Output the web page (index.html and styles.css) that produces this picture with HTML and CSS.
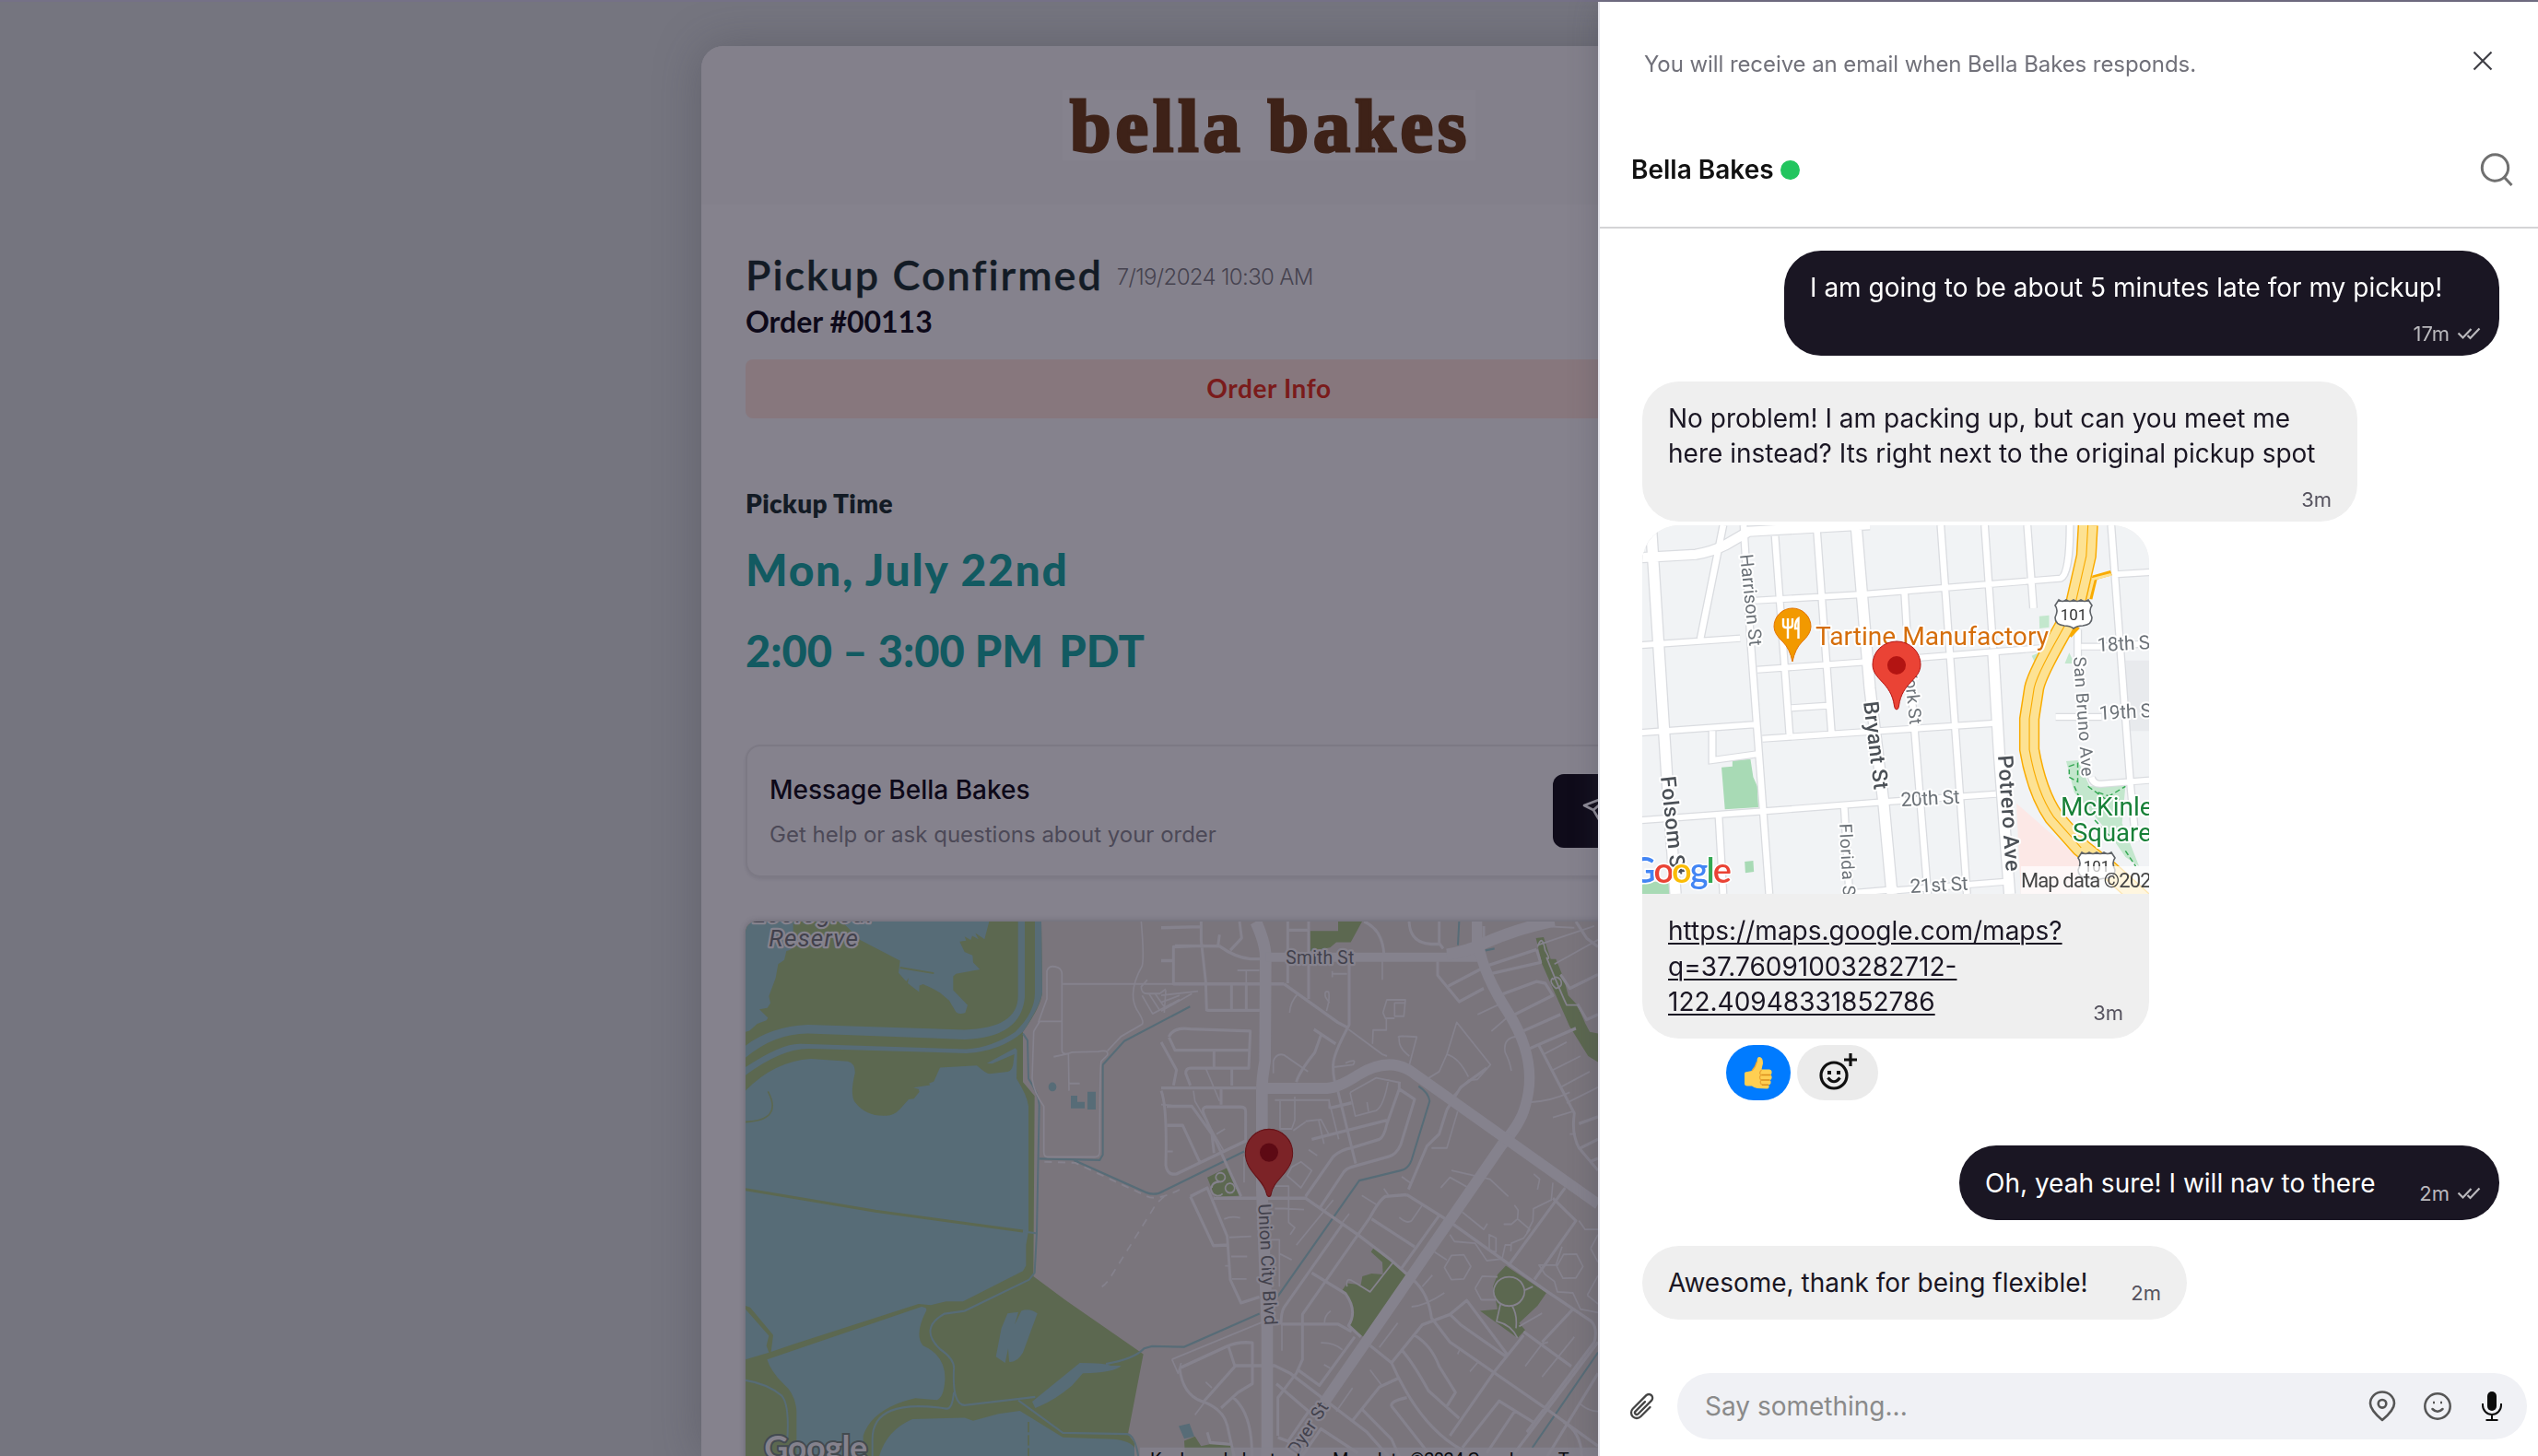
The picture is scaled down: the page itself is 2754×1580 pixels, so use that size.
FILE: index.html
```html
<!DOCTYPE html>
<html lang="en">
<head>
  <meta charset="UTF-8">
  <title>Bella Bakes - Order #00113</title>
  <meta name="viewport" content="width=device-width, initial-scale=1">
  <link rel="stylesheet" href="styles.css">
</head>
<body>
  <main class="order-card">
    <header class="brand"><span class="logo">bella bakes</span></header>
    <div class="order-body">
      <div class="title-row">
        <h1>Pickup Confirmed</h1>
        <span class="date">7/19/2024 10:30 AM</span>
      </div>
      <h2 class="order-number">Order #00113</h2>
      <button class="order-info">Order Info</button>
      <h3 class="pickup-label">Pickup Time</h3>
      <p class="pickup-day">Mon, July 22nd</p>
      <p class="pickup-hours">2:00 – 3:00 PM <span class="zone">PDT</span></p>
      <section class="message-card">
        <div>
          <div class="message-title">Message Bella Bakes</div>
          <div class="message-sub">Get help or ask questions about your order</div>
        </div>
        <button class="message-btn">
          <svg width="40" height="40" viewBox="0 0 40 40" fill="none" stroke="#8f8c98" stroke-width="2.6" stroke-linejoin="round"><path d="M2 14L36 1L22 36L12 19Z M12 19L20 12"/></svg>
          Message
        </button>
      </section>
      <div class="pickup-map">
        <svg viewBox="27 27 3408 2400" width="1136" height="903" preserveAspectRatio="none">
          <rect x="27" y="27" width="3408" height="2400" fill="#7a757c"/>
          <path class="green" d="M27 27H990L993 230Q990 270 930 345V490L968 530L964 1050L1070 1120L1322 1275L1272 1505L1293 1530V1700H27Z"/>
          <!-- ponds and salt flats -->
          <g class="water">
            <path d="M27 27H182V58L185 80Q185 110 160 112L153 138L133 150L125 190L103 242L108 262L98 276L72 280L100 305L95 312L65 322L40 342L27 345Z"/>
            <path d="M340 27H820L805 78L775 60L785 78L765 68L760 80L740 70L745 82L724 85L740 115L766 125L768 145L790 165L712 178L703 185V225L750 268L742 290Q725 297 712 288L690 255L660 232L630 218L605 208L593 212L592 230L555 205L558 190L550 200L525 175L530 140L400 80Z"/>
            <path d="M27 385Q110 330 230 325L740 339Q915 335 914 240V27H936V245Q925 362 740 367L230 350Q120 350 27 420Z"/>
            <path d="M969 27H990L993 230Q990 265 930 345Q860 400 745 407L240 394Q150 390 27 470V447Q150 375 210 380L745 395Q830 390 905 345Q970 290 969 230Z"/>
            <path d="M27 515Q120 430 240 423L360 430Q385 436 383 465Q365 530 385 550Q420 590 485 587Q510 587 530 568L558 540L575 538L593 518L590 510L573 506L628 499L624 494L640 488L660 448L780 442Q810 466 822 466L880 460Q893 458 898 440L902 410L830 437L812 436L905 392L911 398L909 480Q945 530 948 560V920L940 960V1020L930 1035L735 1123L680 1123L630 1133L590 1130L180 1247L110 1268L117 1220L42 1140L27 1135Z"/>
            <path d="M27 1145L103 1222L95 1250L103 1270L27 1290Z"/>
            <path d="M97 1290L600 1138Q620 1140 615 1150Q575 1220 605 1250Q680 1280 676 1350Q672 1400 650 1407L580 1402Q440 1430 410 1510V1700H193V1440Q190 1390 150 1360Q110 1325 97 1290Z"/>
            <path d="M455 1600Q470 1500 570 1462L740 1458L768 1467L850 1447L920 1438L1060 1515L1225 1520Q1280 1525 1293 1545V1700H455Z"/>
            <path d="M880 1157L915 1153L903 1190L925 1150Q950 1140 977 1157L930 1270Q910 1300 885 1297L882 1258L872 1300L842 1282L860 1200Z"/>
            <path d="M960 1412L1115 1300Q1200 1300 1215 1308L1250 1308Q1230 1328 1125 1330L1090 1365Q1030 1410 970 1430Z"/>
            <circle cx="1026" cy="504" r="13"/>
            <path d="M1086 529H1107V547H1131V566H1086ZM1140 518H1167V569H1140ZM1437 1482L1472 1475L1488 1512L1455 1519Z"/>
          </g>
          <path class="dike" stroke-width="8" d="M27 800L450 862L930 920"/>
          <path class="dike" stroke-width="5" d="M100 517Q150 600 27 605M530 160L640 176"/>
          <path class="dike" stroke-width="5" stroke-dasharray="30 8" d="M948 1470V1600"/>
          <path class="creek" d="M930 350L945 370L948 480Q985 530 983 560L975 925L968 1040L950 1060L740 1150L675 1158Q590 1200 660 1260Q710 1290 705 1320Q700 1420 740 1422L970 1398M705 1385Q700 1435 680 1432Q440 1400 440 1520V1600M915 1408L1060 1502L1270 1505Q1300 1510 1310 1600M1200 1303Q1290 1290 1325 1258L1350 1252L1455 1254L1700 1158M27 1350Q100 1360 145 1395Q170 1420 163 1520M935 922L972 926"/>
          <path class="creek" d="M983 711L1180 715L1190 700V440L1260 372L1474 272M1095 715L1330 808Q1360 820 1390 803L1650 690M1758 1110L2025 774L2160 745Q2185 740 2195 715L2254 545Q2250 520 2218 502M2350 27L2346 95M2428 112L2465 105M2588 1545L2802 1270"/>
          <!-- small lanes -->
          <g class="lane">
            <path d="M1315 27Q1325 130 1318 155Q1270 230 1300 280Q1330 320 1315 325L1250 358L1205 400M1060 207H1440M985 315H1057M1440 207L1437 210M980 318L1008 250V170Q1015 150 1045 160Q1057 165 1057 180V400Q1060 415 1090 404L1175 402Q1210 395 1205 412L1185 430Q1180 440 1180 690Q1180 705 1165 706H1010Q998 706 998 690V560Q965 520 960 480L965 345Q970 335 985 315M1030 417L1078 408L1080 515M1080 494H1115M1335 195L1315 215Q1315 235 1335 235H1375L1395 222M1318 240L1352 293L1440 252M1340 235L1375 283M1360 235L1392 275"/>
            <path stroke-dasharray="24 20" d="M1000 720L1100 723L1330 818Q1365 835 1440 800M1390 820L1365 840L1210 1060Q1190 1085 1170 1085"/>
          </g>
          <g transform="translate(1380 0)">
            <path class="green" d="M485 54H576V27H654L617 87H570L550 102L485 112ZM1220 75L1245 72L1268 135H1285L1310 190L1325 240L1355 268L1380 320L1395 345L1422 350V432L1390 415L1330 330L1310 290L1240 150ZM150 765L215 737L260 818L175 822ZM683 980L692 968L755 1010L797 1048L658 1225L612 1192Q635 1120 590 1090L605 1070L650 1075L655 1050L685 1042L722 1045L720 1010ZM1122 1020L1254 1098L1225 1135L1165 1185L1185 1205L1160 1228L1038 1150L1095 1145L1080 1080L1095 1045ZM75 1525L110 1512L130 1540L165 1533L230 1530V1600H80Z"/>
            <g class="lane">
              <path d="M248 168H320M277 168V205M557 178H605M720 140V195M557 170V188M418 290Q420 260 445 235M538 285Q550 250 545 230Q530 225 535 245L548 262M610 338L720 410L735 415M722 290Q735 250 735 253H795L790 300H760V262H795M722 290L730 306H760M733 306V340H690L688 380M775 362Q760 355 832 360L808 440M775 362Q770 390 808 415M868 480L905 460L930 410L962 318L1072 440L1030 482L1000 485L940 540M930 410Q970 420 1000 475M1140 458Q1135 430 1120 405Q1110 360 1165 358M365 465V430Q375 405 400 412L478 460M370 542H547V565L580 560M545 540L578 655M387 545V625H425L435 600V532M562 447L625 440Q640 420 600 435M615 520L700 478L780 492M615 520L632 588L700 572Q725 560 740 482M670 548L675 575M470 603L520 598L545 640M430 630L470 605M512 598L530 668M455 720L490 745L455 795L410 760L425 735ZM480 685L508 702M370 855H400L465 858M370 790H415V895L435 910L420 930M385 1080V945H350M385 985L425 1003M440 960L560 830M590 895L612 870M270 705V780M190 545L145 450M105 515L110 545L205 690M0 555L60 560M20 690H38M180 640L208 625"/>
              <path d="M205 885Q230 875 257 882M222 938L293 935M228 993H280M230 1058H278M208 1020H220M35 1290L350 1175M35 1290L55 1330L65 1300M110 1450L140 1415M145 1355L165 1372M393 1265V1190M532 1185Q530 1165 552 1150M530 1305L550 1315M520 1242Q560 1240 590 1262M680 1320L718 1365M570 1440L623 1372M710 1255L770 1185M815 1138Q860 1135 922 1098M850 1080L883 1047M890 980L930 1003M775 880Q800 900 815 890L850 845M653 817L700 843M725 797L740 817M783 763L815 783M910 795L940 765L1000 795L1015 788M945 745L1070 770L1130 820M980 865L1050 915L1062 898M880 680H930L965 575M1075 343L1125 305M1030 295L1110 262M1275 592L1340 575M1205 548Q1270 545 1330 520M1330 640H1350M1185 1310L1240 1245L1260 1240M1240 1340L1345 1225M1005 1325L1032 1297M965 1275L972 1262M1165 1195L1240 1157M1360 1415Q1390 1440 1422 1440M1230 40L1345 45M1225 95L1410 40M1280 150L1422 80M1245 410L1320 375M1275 455L1365 415M1300 505L1395 460M1320 550L1422 505"/>
              <path d="M922 1025L945 990L985 988L1008 1022L985 1058L945 1060ZM1288 1022L1310 987L1352 986L1373 1022L1350 1055L1308 1056ZM1022 1085L1045 1050L1095 1052M1022 1085L1042 1118L1090 1118M1398 970L1422 930M1398 970L1422 1010M1387 1105L1422 1048M1387 1105L1422 1130M1068 975V930L1090 940V980ZM1115 900L1140 900L1160 885L1200 915L1180 940L1140 955L1138 978M1150 845L1162 860L1160 885M1213 755L1232 770L1225 800M1275 780L1270 830L1212 855L1210 890L1190 925M940 930L955 950L1022 955L1060 1005L1110 1000L1120 960H1140M1250 1045L1280 1065L1290 1095L1340 1098L1365 1145L1422 1155M1360 890L1380 915H1422M1250 1045L1230 1018H1285L1305 965"/>
              <path d="M190 752A15 13 0 1 0 196 752ZM185 778A22 20 0 1 0 200 812M222 782A15 14 0 1 0 226 782ZM165 795Q165 780 190 778M1132 1052A50 42 0 1 0 1133 1052ZM1105 1128L1092 1180Q1140 1190 1160 1228M1142 1135Q1160 1160 1155 1200M1185 1090L1210 1080M0 285L100 235M0 260L60 240M15 225L10 290M0 240L120 228M1275 190Q1260 200 1285 220Q1310 215 1300 195Q1285 180 1275 195M605 1080Q600 1050 625 1065L680 1095L755 1010M1225 100Q1240 60 1250 110Q1270 140 1255 132Q1300 230 1320 268H1355"/>
            </g>
            <!-- residential streets -->
            <g class="street">
              <path d="M0 45L130 42M130 27V80L145 200L148 285M130 97L40 100V207H400M0 140H40M45 97L190 98Q240 130 290 135H330M185 97L190 65M225 110L262 75L255 27M412 27V205M412 52H478M480 27V250M148 283H325M229 207V280M277 207V280M400 207L575 318L605 332M612 150V325Q560 410 560 440Q558 480 575 515L633 725M497 338L568 380M520 355L500 405Q450 460 440 490M807 27Q810 90 880 92H910M905 27V90L918 105M660 27Q720 50 725 120M900 140V182L970 258L1050 220M935 213L1060 155L1222 108M1100 240L1222 200L1250 205L1275 240L1140 300M1160 350L1300 295M1195 395L1350 335M1230 385L1345 580Q1335 640 1360 680L1422 745M1222 108L1235 145L1060 180M1300 180L1330 220L1422 180M1350 27L1385 75L1422 100M1355 265L1385 310L1422 295M1360 610L1422 590M1365 680L1422 655M1395 720L1422 710M1050 40V90"/>
              <path d="M25 360Q40 330 95 337L290 343L285 450H95Q80 450 80 465L95 500M25 360L45 398H285M172 400V448M230 450V500M0 507H310M195 510V555M0 375L50 455L40 500M0 515Q20 560 15 730Q20 760 50 755L275 660V575Q275 562 260 562H145Q130 565 140 585L260 820M18 560H100L165 640L172 695M20 615H70L125 720M95 820L150 795L215 935L225 1060L260 1127L320 1110M95 820L170 962L215 960M170 825L470 825L640 930L750 1005L820 1060Q870 1100 880 1170L940 1240L1250 1430L1422 1540M470 820L560 705Q585 685 620 680L710 655Q725 650 735 610L775 510V490M490 655L735 600M775 510L825 540L780 670Q765 700 740 705L620 735Q600 740 590 755L515 855M550 565L620 550M805 800L865 675L905 640L930 570L975 505L1060 450M590 900L400 1140Q390 1155 390 1190M800 815L730 820Q710 830 680 880L460 1160V1290L440 1330L380 1400V1510M800 815L935 890L1250 1090L1400 1180Q1422 1200 1410 1240L1190 1500M685 885L825 965M905 875L780 1030M490 1040L600 1100Q640 1150 610 1192L650 1225M390 1188H575L620 1210M1130 1020L1315 795M1215 1060L1350 890L1275 825"/>
              <path d="M60 1315L215 1252Q250 1238 297 1242V1360L250 1385L195 1430M60 1315Q70 1390 130 1410Q200 1430 215 1480L240 1580M220 1255L240 1310L140 1410M240 1308H370L420 1330L670 1500L740 1570M235 1400Q300 1450 295 1580M375 1360L480 1440L410 1530M445 1320L515 1365L630 1225M680 1250L750 1300Q850 1500 1000 1560M750 1300L850 1190L940 1160L995 1120L1130 1280M825 1220Q880 1250 905 1310L958 1385L930 1425M785 1265Q820 1300 870 1380L970 1460M940 1160L975 1190L1120 1280M770 1345L710 1370L620 1470M750 1425Q745 1410 800 1400M750 1425L870 1560M655 1435L750 1520L780 1580M450 1580L520 1490L640 1560M380 1515L410 1525M1180 1220L1085 1325L940 1510M1180 1210L1335 1310M1340 1145L1240 1240M980 1545L1100 1410L1210 1470M1150 1440L1060 1560M1422 1240L1150 1560M1422 1330L1250 1580M1310 1470Q1370 1500 1370 1580M150 1500L160 1530L230 1535"/>
            </g>
            <g class="road">
              <path stroke-width="38" d="M308 27Q340 90 340 130L338 430Q328 480 328 515V800L345 1200V1600"/>
              <path stroke-width="26" d="M340 130H1030"/>
              <path stroke-width="34" d="M1028 27V110M930 122Q990 115 1050 90Q1150 50 1280 25M1035 100Q1050 180 1130 290Q1230 430 1185 560Q1170 610 1110 670L530 1415"/>
              <path stroke-width="32" d="M330 508H540Q580 505 640 470Q750 410 830 470L1422 842"/>
            </g>
            <path d="M351 820Q345 820 343 812C335 770 274 750 274 695A77 69 0 0 1 428 695C428 750 365 770 358 812Q357 820 351 820Z" fill="#7c2327" stroke="#661318" stroke-width="3"/>
            <ellipse cx="351" cy="693" rx="30" ry="27" fill="#5d0a14"/>
            <g class="map-label" font-size="58">
              <text transform="translate(406 149) scale(1 .886)" textLength="222">Smith St</text>
              <text transform="translate(316 842) scale(1 .886) rotate(87)" textLength="395">Union City Blvd</text>
              <text transform="translate(443 1568) scale(1 .886) rotate(-57)" textLength="190">Dyer St</text>
            </g>
          </g>
          <g class="map-label" font-size="78" font-style="italic">
            <text transform="translate(50 29) scale(1 .886)" textLength="390">Ecological</text>
            <text transform="translate(103 100) scale(1 .886)" textLength="290">Reserve</text>
          </g>
          <text class="map-logo" transform="translate(88 1580) scale(1 .886)" textLength="336">Google</text>
          <rect x="1310" y="1544" width="2200" height="80" fill="#85828d" opacity=".8"/>
          <g class="map-legal">
            <text transform="translate(1344 1599) scale(1 .886)" textLength="525">Keyboard shortcuts</text>
            <text transform="translate(1938 1599) scale(1 .886)" textLength="620">Map data ©2024 Google</text>
            <text transform="translate(2672 1599) scale(1 .886)">Terms</text>
          </g>
        </svg>
      </div>
    </div>
  </main>

  <aside class="chat">
    <div class="notice">
      <span>You will receive an email when Bella Bakes responds.</span>
      <svg class="close" width="22" height="22" viewBox="0 0 22 22" fill="none" stroke="#3f3f46" stroke-width="2.2"><path d="M1.5 1.5L20.5 20.5M20.5 1.5L1.5 20.5"/></svg>
    </div>
    <div class="chat-head">
      <h2>Bella Bakes</h2>
      <span class="online"></span>
      <svg class="search" width="36" height="36" viewBox="0 0 36 36" fill="none" stroke="#707070" stroke-width="3"><circle cx="16.500" cy="16" r="14.200"/><path d="M26.500 26.500L34.500 35"/></svg>
    </div>

    <div class="messages">
      <div class="bubble mine first">
        <p>I am going to be about 5 minutes late for my pickup!</p>
        <div class="meta">17m <svg class="ticks" width="26" height="14" viewBox="0 0 26 14"><path d="M1.5 6.5L6.5 11.5L15.5 2M11.5 9L14.5 12L24.5 1.5"/></svg></div>
      </div>
      <div class="bubble theirs second">
        <p>No problem! I am packing up, but can you meet me<br>here instead? Its right next to the original pickup spot</p>
        <div class="meta">3m</div>
      </div>
      <div class="bubble theirs location">
        <svg width="550" height="400" viewBox="12 10 550 400">
          <rect x="12" y="10" width="550" height="400" fill="#f1f3f5"/>
          <!-- city grid, drawn in stretched units -->
          <g transform="scale(.3699 .33333)">
            <path fill="#e8eaed" d="M1450 470H1520V700H1460Z"/>
            <path fill="#a8dab5" d="M265 818L297 815V795L350 792L358 850L370 880L373 948L275 955ZM333 1125L358 1122L360 1158L335 1162ZM32 1200L55 1190H115V1230H32Z"/>
            <path fill="#c3e7cd" d="M1197 326L1226 323V362L1198 366ZM1175 455L1205 440L1190 490ZM1285 445L1300 480H1272ZM1276 798L1310 795L1345 880L1450 878L1440 1000L1490 1140L1450 1110L1400 1030L1300 900Z"/>
            <path fill="#fce8e6" d="M1130 935L1320 1120V1230H1143Z"/>
            <g fill="none">
              <path class="edge thick" d="M32 135L190 125Q240 115 275 95L345 50L700 28M58 30L105 850L130 1230M660 30L700 560L740 930L765 1230M1062 440L1080 780L1110 1230"/>
              <path class="edge" d="M270 30L203 400M330 30L350 400L405 1230M422 65L465 715M545 50L588 710M908 30L985 1230M1037 30L1062 430M1162 30L1180 300M365 275L680 255L1260 203Q1287 190 1287 30M802 250L812 430L870 1230M32 420L320 398M370 500L690 475L1200 430M1320 425H1380L1520 415M1408 30L1465 880L1480 1060M1420 190L1520 183M1310 370V470M1245 654H1380M32 705L370 678M385 725L1060 675M470 625L575 617M238 700V795L370 775M32 990L400 960L750 930L1070 905M257 980L270 1230M625 945L640 1230M760 1220L1100 1190M620 1230L780 1215M1350 850Q1355 875 1380 872L1520 860"/>
              <path class="way thick" d="M32 135L190 125Q240 115 275 95L345 50L700 28M58 30L105 850L130 1230M660 30L700 560L740 930L765 1230M1062 440L1080 780L1110 1230"/>
              <path class="way" d="M270 30L203 400M330 30L350 400L405 1230M422 65L465 715M545 50L588 710M908 30L985 1230M1037 30L1062 430M1162 30L1180 300M365 275L680 255L1260 203Q1287 190 1287 30M802 250L812 430L870 1230M32 420L320 398M370 500L690 475L1200 430M1320 425H1380L1520 415M1408 30L1465 880L1480 1060M1420 190L1520 183M1310 370V470M1245 654H1380M32 705L370 678M385 725L1060 675M470 625L575 617M238 700V795L370 775M32 990L400 960L750 930L1070 905M257 980L270 1230M625 945L640 1230M760 1220L1100 1190M620 1230L780 1215M1350 850Q1355 875 1380 872L1520 860"/>
              <path stroke="#f9ab00" stroke-width="16" d="M1345 270L1360 200L1408 185M1285 390L1310 360"/>
              <path stroke="#fde293" stroke-width="9" d="M1340 270L1355 205L1408 190"/>
              <path stroke="#f9ab00" stroke-width="60" d="M1340 30L1335 130L1300 300L1240 420Q1190 520 1182 560L1168 660V760Q1190 900 1240 980L1320 1080L1400 1150L1500 1250"/>
              <path stroke="#fde293" stroke-width="52" d="M1340 30L1335 130L1300 300L1240 420Q1190 520 1182 560L1168 660V760Q1190 900 1240 980L1320 1080L1400 1150L1500 1250"/>
              <path stroke="#f9ab00" stroke-width="3" d="M1340 30L1335 130L1300 300L1240 420Q1190 520 1182 560L1168 660V760Q1190 900 1240 980L1320 1080"/>
              <path stroke="#34a853" stroke-width="4" stroke-dasharray="16 9" d="M1285 815L1310 805V865L1285 850ZM1300 880L1320 930M1340 880L1390 920L1450 880M1370 900L1440 925M1360 990L1420 1060M1450 1090L1480 1140"/>
            </g>
          </g>
          <g class="poi">
            <text class="street-name" transform="translate(118 42) rotate(84)" font-size="20" textLength="100">Harrison St</text>
            <text class="avenue-name" transform="translate(32 283) rotate(84)" font-size="23" textLength="108">Folsom St</text>
            <text class="avenue-name" transform="translate(252 202) rotate(83)" font-size="23" textLength="96">Bryant St</text>
            <text class="avenue-name" transform="translate(398 260) rotate(86)" font-size="23" textLength="126">Potrero Ave</text>
            <text class="street-name" transform="translate(226 334) rotate(87)" font-size="19" textLength="85">Florida St</text>
            <text class="street-name" transform="translate(296 166) rotate(84)" font-size="19" textLength="61">York St</text>
            <text class="street-name" transform="translate(480 153) rotate(86)" font-size="19" textLength="130">San Bruno Ave</text>
            <text class="street-name" transform="translate(293 315) rotate(-3)" font-size="21" textLength="64">20th St</text>
            <text class="street-name" transform="translate(303 409) rotate(-3)" font-size="21" textLength="63">21st St</text>
            <text class="street-name" transform="translate(506 147) rotate(-3)" font-size="21" textLength="64">18th St</text>
            <text class="street-name" transform="translate(508 221) rotate(-3)" font-size="21" textLength="64">19th St</text>
            <text x="200" y="140" fill="#d56e0c" font-size="28" textLength="253" lengthAdjust="spacingAndGlyphs">Tartine Manufactory</text>
            <text x="466" y="325" fill="#188038" font-size="28">McKinley</text>
            <text x="479" y="353" fill="#188038" font-size="27.500">Square</text>
          </g>
          <path d="M175 158Q172 144 165 137Q155 128 155 120A20 20 0 0 1 195 120Q195 128 185 137Q178 144 175 158Z" fill="#f29900" stroke="#e37400"/>
          <path d="M165 111V118Q165 121 168 121H172Q175 121 175 118V111M170 111V133M181.500 133V111Q178 113 178 122H181.500" fill="none" stroke="#fff" stroke-width="2.400"/>
          <g fill="#fff" stroke="#5f6368" stroke-width="1.600">
            <path d="M464 91Q468 94 472 91Q476 94 480 91Q484 94 488 91Q492 94 496 91L500 97Q496 102 500 110Q500 118 490 119Q484 119 480 122Q476 119 470 119Q460 118 460 110Q464 102 460 97Z"/>
            <path d="M489 365Q493 368 497 365Q501 368 505 365Q509 368 513 365Q517 368 521 365L525 371Q521 376 525 384Q525 392 515 393Q509 393 505 396Q501 393 495 393Q485 392 485 384Q489 376 485 371Z"/>
          </g>
          <g class="shield-num"><text x="480" y="113">101</text><text x="505" y="386">101</text></g>
          <rect x="423" y="380" width="140" height="30" fill="#fff" opacity=".7"/>
          <text x="423" y="403" font-family="Roboto" font-size="22" fill="#444" textLength="153">Map data ©2024</text>
          <text class="google" x="-1" y="398" textLength="110"><tspan fill="#4285f4">G</tspan><tspan fill="#ea4335">o</tspan><tspan fill="#fbbc04">o</tspan><tspan fill="#4285f4">g</tspan><tspan fill="#34a853">l</tspan><tspan fill="#ea4335">e</tspan></text>
          <path d="M288 210Q286 210 285.500 206C282 180 262 178 262 161A26 25 0 0 1 314 161C314 178 294 180 290.500 206Q290 210 288 210Z" fill="#ea4335" stroke="#b31412"/>
          <circle cx="288" cy="162" r="10" fill="#b31412"/>
        </svg>
        <div class="link-row">
          <a href="https://maps.google.com/maps?q=37.76091003282712-122.40948331852786">https://maps.google.com/maps?<br>q=37.76091003282712-<br>122.40948331852786</a>
          <div class="meta">3m</div>
        </div>
      </div>
      <div class="reactions">
        <span class="reaction liked">
          <svg width="32" height="36" viewBox="0 0 32 36"><path d="M1 19Q1 17 4 17L9 16Q13 12 14.500 6Q14.500 1 17 1Q21 1 21 8Q20 12 19.500 14.500H28Q31 15 30.500 18Q30.500 20 29 20.500Q31 21 30.500 24Q30 26 28.500 26Q30 27 29.500 29.500Q29 31 27 31.500Q28 32.500 27.500 34Q27 35.500 25 35.500L15 35Q11 34 9 32.500H4Q1 32 1 30Z" fill="#ffcf52"/><path d="M19 20.500H29M19 26H28.500M20 31.300H27" stroke="#d98e1f" stroke-width="1.500" fill="none"/><path d="M9 16Q13 12 14.500 6M19.500 15Q16 19 19 20.500Q16 23 19 26Q17 29 20 31.300" stroke="#eaa534" stroke-width="1.300" fill="none"/></svg>
        </span>
        <span class="reaction">
          <svg class="add-emoji" width="42" height="42" viewBox="0 0 42 42" fill="none" stroke="#111" stroke-width="3.200"><circle cx="17" cy="26" r="14"/><path d="M10.500 28.500Q17 37 23.500 28.500M28 9H42M35 2V16"/><path d="M10 23H14M20 23H24" stroke-width="4"/></svg>
        </span>
      </div>
      <div class="bubble mine inline third">
        <p>Oh, yeah sure! I will nav to there</p>
        <div class="meta">2m <svg class="ticks" width="26" height="14" viewBox="0 0 26 14"><path d="M1.5 6.5L6.5 11.5L15.5 2M11.5 9L14.5 12L24.5 1.5"/></svg></div>
      </div>
      <div class="bubble theirs inline fourth">
        <p>Awesome, thank for being flexible!</p>
        <div class="meta">2m</div>
      </div>
    </div>

    <div class="composer">
      <svg width="32" height="32" viewBox="0 0 24 24" fill="none" stroke="#444" stroke-width="1.700" stroke-linecap="round" stroke-linejoin="round"><path d="m18.375 12.739-7.693 7.693a4.500 4.500 0 0 1-6.364-6.364l10.940-10.940A3 3 0 1 1 19.500 7.372L8.552 18.320m.009-.01-.010.010m5.699-9.941-7.810 7.810a1.500 1.500 0 0 0 2.112 2.130"/></svg>
      <div class="input">
        <span class="placeholder">Say something...</span>
        <svg width="30" height="34" viewBox="0 0 30 34" fill="none" stroke="#555" stroke-width="2.600" stroke-linejoin="round"><path d="M15 32Q2 21 2 14A13 12.500 0 0 1 28 14Q28 21 15 32Z"/><circle cx="15" cy="14.300" r="4.300"/></svg>
        <svg width="32" height="32" viewBox="0 0 32 32" fill="none" stroke="#555" stroke-width="2.500"><circle cx="16" cy="16" r="13.700"/><path stroke-linecap="round" d="M10.500 19Q16 24.500 21.500 19"/><path d="M11 12H13M19 12H21"/></svg>
        <svg width="24" height="34" viewBox="0 0 24 34" fill="none" stroke="#0c0c0c" stroke-width="2"><rect x="7" y="1" width="10" height="21" rx="5" fill="#0c0c0c" stroke="none"/><path d="M2 14V16A10 10 0 0 0 22 16V14M12 26V32M5.500 32H18.500"/></svg>
      </div>
    </div>
  </aside>
</body>
</html>
```
FILE: styles.css
```css
* { box-sizing: border-box; }
html, body { height: 1580px; overflow: hidden; }
body { margin: 0; padding-top: 48px; border-top: 2px solid #757187; background: #75757f; font-family: Inter, "Liberation Sans", sans-serif; }
h1, h2, h3, p { margin: 0; }
svg { display: block; flex: none; }
button { border: none; font-family: inherit; }

.order-card { width: 1232px; height: 1530px; margin: 0 auto; overflow: hidden; background: #85828d; border-radius: 24px 24px 0 0; box-shadow: 0 0 50px rgba(60, 60, 72, .35); font-family: Lato, sans-serif; }
.brand { display: flex; justify-content: center; align-items: center; height: 172px; background: #83808b; }
.logo { width: 448px; height: 76px; padding-left: 8px; background: #85828d; color: #3e2218; font: bold 80px/78px "Liberation Serif", serif; letter-spacing: 5px; white-space: nowrap; -webkit-text-stroke: 3px #3e2218; }
.order-body { padding: 50px 48px 0; }
.title-row { display: flex; align-items: flex-start; gap: 15px; height: 52px; }
h1 { color: #131b25; font-size: 45px; line-height: 52px; font-weight: 600; letter-spacing: 2px; -webkit-text-stroke: .3px #131b25; }
.date { color: #45424f; font: 300 24px/57px Inter, sans-serif; letter-spacing: -.65px; }
.order-number { margin-top: 5px; color: #0d0919; font-size: 32px; line-height: 40px; font-weight: 700; }
.order-info { display: block; width: 100%; height: 64px; margin-top: 21px; padding-bottom: 3px; border-radius: 8px; background: #87777d; color: #7a1b1b; font-family: Lato, sans-serif; font-size: 28px; font-weight: 700; letter-spacing: .6px; }
.pickup-label { margin-top: 74px; color: #131b25; font-size: 28px; line-height: 36px; font-weight: 800; letter-spacing: .4px; }
.pickup-day, .pickup-hours { margin-top: 26px; color: #125a61; font-size: 47px; line-height: 56px; font-weight: 900; }
.pickup-day { font-size: 48px; letter-spacing: 1.7px; }
.pickup-hours { margin-top: 32px; }
.zone { margin-left: 6px; }

.message-card { display: flex; justify-content: space-between; align-items: center; height: 144px; margin-top: 74px; padding: 0 24px; border: 2px solid #7c7984; border-radius: 16px; box-shadow: 0 2px 3px rgba(60, 60, 72, .12); font-family: Inter, sans-serif; }
.message-title { color: #0d0919; font-size: 28px; line-height: 36px; font-weight: 500; }
.message-sub { margin-top: 15px; color: #4c4957; font-size: 24px; line-height: 32px; }
.message-btn { display: flex; align-items: center; gap: 12px; width: 234px; height: 80px; padding: 0 32px; border-radius: 12px; background: #0f0b1a; color: #8f8c98; font-size: 28px; }
.pickup-map { height: 903px; margin-top: 48px; border-radius: 12px; overflow: hidden; box-shadow: 0 0 6px rgba(60, 60, 72, .4); }

.green { fill: #5c6850; }
.water { fill: #576c77; }
.dike { fill: none; stroke: #5c6850; }
.creek { fill: none; stroke: #576c77; stroke-width: 6; }
.lane, .street, .road { fill: none; stroke: #85828d; stroke-linejoin: round; }
.lane { stroke-width: 5; }
.street { stroke-width: 9; }
.map-label { fill: #42414c; stroke: #85828d; stroke-width: 14; stroke-linejoin: round; paint-order: stroke; font-family: Roboto, sans-serif; }
.map-logo { fill: #85828d; stroke: #434a50; stroke-width: 12; paint-order: stroke; font: 700 108px Lato, sans-serif; }
.map-legal { fill: #0b0b10; font: 60px Roboto, sans-serif; }

/* chat drawer */
.chat { position: fixed; top: 2px; right: 0; display: flex; flex-direction: column; width: 1020px; height: 1578px; border-left: 2px solid #e2e2ea; background: #fff; box-shadow: 0 0 30px rgba(60, 60, 72, .3); }
.notice { display: flex; justify-content: space-between; height: 120px; padding: 52px 49px 0 48px; color: #71717a; font-size: 24px; line-height: 32px; letter-spacing: -.08px; }
.close { margin-top: 1px; }
.chat-head { display: flex; align-items: center; height: 126px; padding: 0 27px 0 34px; border-bottom: 2px solid #d4d4d6; }
.chat-head h2 { color: #111; font-size: 28px; font-weight: 600; }
.online { width: 21px; height: 21px; margin: 1px 0 0 7px; border-radius: 50%; background: #22c55e; }
.search { margin-left: auto; }

.messages { display: flex; flex-direction: column; flex: 1; align-items: flex-start; padding: 24px 42px 0 46px; }
.bubble { border-radius: 40px; padding: 20.5px 28px 10px; font-size: 28px; line-height: 38.5px; white-space: nowrap; }
.mine { align-self: flex-end; padding-right: 20px; background: #1a1623; color: #fff; }
.theirs { background: #efefef; color: #1a1623; }
.meta { display: flex; justify-content: flex-end; align-items: center; gap: 8px; margin-top: 16.5px; color: #55525e; font-size: 22px; line-height: 28px; }
.mine .meta { color: #bab9bd; }
.ticks { fill: none; stroke: #bab9bd; stroke-width: 2.2; }
.first { width: 776px; height: 114px; }
.second { width: 776px; height: 152px; margin-top: 28px; }
.location { width: 550px; height: 557px; margin-top: 4px; padding: 0; overflow: hidden; }
.link-row { display: flex; justify-content: space-between; align-items: flex-end; padding: 21px 28px 0; }
.link-row a { color: inherit; text-decoration-thickness: 2px; text-underline-offset: 3px; }
.link-row .meta, .inline .meta { margin: 0 0 -6px; }
.reactions { display: flex; gap: 7px; margin: 7px 0 0 91px; }
.reaction { display: flex; justify-content: center; align-items: center; width: 88px; height: 60px; border-radius: 30px; background: #ebebeb; }
.liked { width: 70px; background: #007bff; }
.add-emoji { margin: -5px 0 0 -1px; }
.inline { display: flex; justify-content: space-between; align-items: flex-end; height: 80px; padding-bottom: 21px; }
.third { width: 586px; height: 81px; margin-top: 49px; }
.fourth { width: 591px; margin-top: 28px; }

.edge { stroke: #dadce0; stroke-width: 25; }
.edge.thick { stroke-width: 37; }
.way { stroke: #fff; stroke-width: 18; }
.way.thick { stroke-width: 30; }
.poi { stroke: #fff; stroke-width: 4; stroke-linejoin: round; paint-order: stroke; font-family: Roboto, sans-serif; }
.street-name { fill: #6b7177; }
.avenue-name { fill: #4b5056; font-weight: 500; }
.shield-num { fill: #333; font: 17px Roboto, sans-serif; text-anchor: middle; }
.google { font: 600 38px Lato, sans-serif; stroke: #fff; stroke-width: 3; paint-order: stroke; }

.composer { display: flex; align-items: center; gap: 22px; height: 72px; margin-bottom: 18px; padding: 0 12px 0 30px; }
.input { display: flex; align-items: center; flex: 1; gap: 29px; height: 72px; padding: 0 26px 0 30px; border-radius: 36px; background: #f0f1f5; }
.input svg:last-child { margin-left: 2px; }
.placeholder { flex: 1; color: #8a8a8a; font-size: 28px; line-height: 34px; }
```
